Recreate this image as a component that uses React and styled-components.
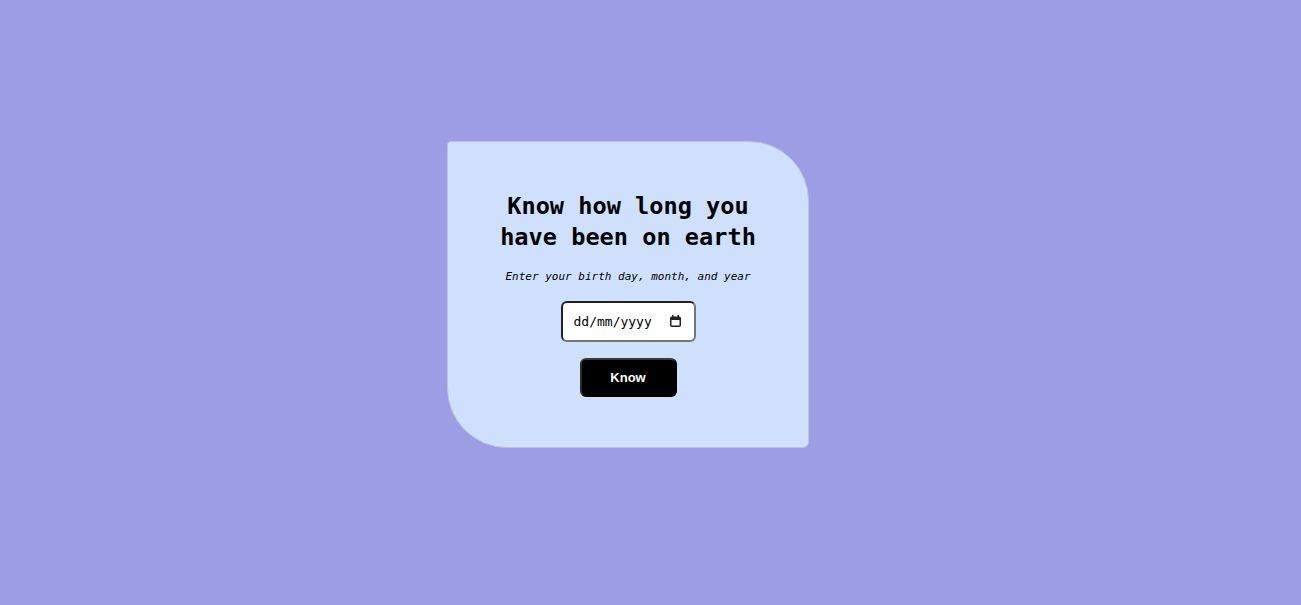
import React from "react";
import styled, { createGlobalStyle } from "styled-components";

const GlobalStyle = createGlobalStyle`
  html, body {
    margin: 0;
    padding: 0;
    background: #9d9de6;
  }
  body {
    font-family: "DejaVu Sans Mono", monospace;
  }
`;

const Page = styled.main`
  min-height: 100vh;
  box-sizing: border-box;
  display: flex;
  align-items: center;
  justify-content: center;
  padding: 0 45px 17px 0;
`;

const Card = styled.section`
  box-sizing: border-box;
  width: 362px;
  height: 307px;
  background: #cee0fc;
  border: 1px solid #bfc3d6;
  border-radius: 4px 60px 6px 60px;
  display: flex;
  flex-direction: column;
  align-items: center;
  padding-top: 49px;
`;

const Title = styled.h1`
  margin: 0;
  max-width: 290px;
  font-family: "DejaVu Sans Mono", monospace;
  font-size: 23.6px;
  line-height: 31px;
  font-weight: bold;
  color: #000;
  text-align: center;
`;

const Subtitle = styled.p`
  margin: 16px 0 0;
  font-family: "DejaVu Sans Mono", monospace;
  font-size: 11px;
  line-height: 16px;
  font-style: italic;
  color: #000;
`;

const DateField = styled.label`
  box-sizing: border-box;
  margin-top: 16px;
  width: 135px;
  height: 41px;
  padding: 0 13px 0 11px;
  display: flex;
  align-items: center;
  gap: 6px;
  background: #fff;
  border: 2px inset #767676;
  border-radius: 6px;
  cursor: text;
`;

const DateText = styled.input`
  flex: 1;
  min-width: 0;
  padding: 0;
  border: none;
  outline: none;
  background: transparent;
  font-family: "DejaVu Sans Mono", monospace;
  font-size: 13px;
  color: #000;

  &::placeholder {
    color: #000;
    opacity: 1;
  }
`;

const CalendarIcon = styled.svg`
  flex: none;
  width: 11px;
  height: 12px;
  color: #222;
`;

const Button = styled.button`
  box-sizing: border-box;
  margin-top: 16px;
  width: 97px;
  height: 39px;
  background: #000;
  color: #fff;
  border: 2px solid #000;
  border-top-color: #3a3a3a;
  border-left-color: #2a2a2a;
  border-radius: 6px;
  font-family: "Liberation Sans", Arial, sans-serif;
  font-size: 13px;
  font-weight: bold;
  cursor: pointer;
`;

export default function App() {
  return (
    <>
      <GlobalStyle />
      <Page>
        <Card>
          <Title>Know how long you have been on earth</Title>
          <Subtitle>Enter your birth day, month, and year</Subtitle>
          <DateField>
            <DateText type="text" placeholder="dd/mm/yyyy" />
            <CalendarIcon viewBox="0 0 11 12" aria-hidden="true">
              <rect x="0.75" y="2.25" width="9.5" height="9" rx="1" fill="none" stroke="currentColor" strokeWidth="1.5" />
              <rect x="1" y="2.5" width="9" height="2.5" fill="currentColor" />
              <rect x="2" y="0" width="1.5" height="3" fill="currentColor" />
              <rect x="7.5" y="0" width="1.5" height="3" fill="currentColor" />
            </CalendarIcon>
          </DateField>
          <Button type="button">Know</Button>
        </Card>
      </Page>
    </>
  );
}
